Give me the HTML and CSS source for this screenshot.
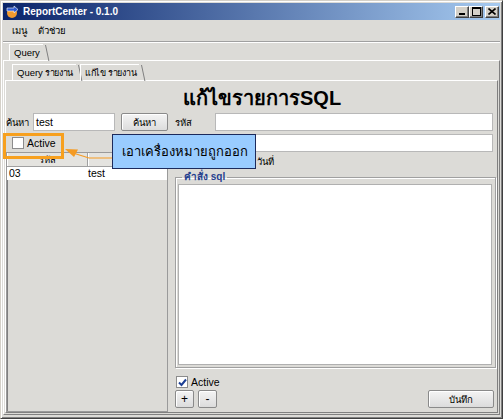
FILE: index.html
```html
<!DOCTYPE html>
<html lang="th">
<head>
<meta charset="utf-8">
<title>ReportCenter - 0.1.0</title>
<link rel="stylesheet" href="styles.css">
</head>
<body>
<div class="window">
  <div class="titlebar">
    <svg class="app-icon" width="15" height="14" viewBox="0 0 15 14">
      <circle cx="7" cy="8" r="5" fill="#f29a2e"/>
      <path d="M2 3 L9 3 L9 1 L13 4.5 L9 8 L9 6 L2 6 Z" fill="#2f5bd0" stroke="#fff" stroke-width="0.6"/>
    </svg>
    <span class="title">ReportCenter - 0.1.0</span>
    <div class="win-btns">
      <span class="wbtn"><svg width="8" height="7" viewBox="0 0 8 7"><rect x="1" y="5" width="6" height="2" fill="#000"/></svg></span>
      <span class="wbtn"><svg width="9" height="9" viewBox="0 0 9 9"><rect x="0.5" y="0.5" width="8" height="8" fill="none" stroke="#000"/><rect x="0" y="0" width="9" height="2" fill="#000"/></svg></span>
      <span class="wbtn close"><svg width="8" height="7" viewBox="0 0 8 7"><path d="M0.5 0.5 L7.5 6.5 M7.5 0.5 L0.5 6.5" stroke="#000" stroke-width="1.6"/></svg></span>
    </div>
  </div>
  <div class="menubar">
    <span class="menu th">เมนู</span>
    <span class="menu th">ตัวช่วย</span>
  </div>
  <div class="tabs1">
    <span class="tab sel">Query</span>
  </div>
  <div class="panel1">
    <div class="tabs2">
      <span class="tab">Query <span class="th">รายงาน</span></span>
      <span class="tab sel th">แก้ไข รายงาน</span>
    </div>
    <div class="panel2">
      <div class="heading">แก้ไขรายการSQL</div>
      <div class="cols">
        <div class="left">
          <div class="search">
            <span class="lbl-search th">ค้นหา</span>
            <span class="input small">test</span>
            <span class="btn search-btn th">ค้นหา</span>
          </div>
          <div class="check-row first">
            <span class="checkbox"></span>
            <span>Active</span>
          </div>
          <div class="table">
            <div class="thead">
              <span class="c1 th">รหัส</span>
              <span class="c2"></span>
            </div>
            <div class="trow">
              <span class="c1">03</span>
              <span class="c2">test</span>
            </div>
          </div>
        </div>
        <div class="right">
          <div class="frow">
            <span class="flabel th">รหัส</span>
            <span class="input wide"></span>
          </div>
          <div class="frow second">
            <span class="flabel"></span>
            <span class="input wide"></span>
          </div>
          <div class="date-row th">วันที่</div>
          <fieldset class="group">
            <legend class="th">คำสั่ง sql</legend>
            <div class="textarea"></div>
          </fieldset>
          <div class="check-row bottom">
            <span class="checkbox checked">
              <svg width="9" height="9" viewBox="0 0 9 9"><path d="M1 4.5 L3.5 7 L8 1.5" fill="none" stroke="#1c3f94" stroke-width="2"/></svg>
            </span>
            <span>Active</span>
          </div>
          <div class="btn-row">
            <span class="btn sq">+</span>
            <span class="btn sq">-</span>
            <span class="spacer"></span>
            <span class="btn save th">บันทึก</span>
          </div>
        </div>
      </div>
    </div>
  </div>

  <div class="highlight"></div>
  <svg class="arrow" width="60" height="20" viewBox="60 145 60 20">
    <path d="M72 152 L88 157 L111 157" fill="none" stroke="#f59b23" stroke-width="1.2"/>
    <polygon points="64,148 77,148.5 73,156" fill="#f59b23"/>
  </svg>
  <div class="callout">เอาเครื่องหมายถูกออก</div>
</div>
</body>
</html>
```
FILE: styles.css
```css
* { box-sizing: border-box; }
html, body { margin: 0; padding: 0; }
body {
  width: 503px;
  height: 419px;
  overflow: hidden;
  font-family: "Liberation Sans", "DejaVu Sans", sans-serif;
  font-size: 10.5px;
  color: #000;
  background: #dcdbd7;
}
.th { font-size: 9.5px; }
.window {
  position: relative;
  width: 503px;
  height: 419px;
  display: flex;
  flex-direction: column;
  padding: 2px 2px 3px 2px;
  background: #dcdbd7;
  border: 1px solid #d4d0c8;
  border-right-color: #404040;
  border-bottom-color: #404040;
  box-shadow: inset 1px 1px 0 #fff, inset -1px -1px 0 #808080;
}
.titlebar {
  height: 17px;
  display: flex;
  align-items: center;
  background: linear-gradient(to right, #0a246a, #a6caf0);
  padding-left: 2px;
  padding-right: 1px;
}
.app-icon { margin-right: 3px; }
.title {
  color: #fff;
  font-weight: bold;
  font-size: 10px;
  flex: 1;
}
.win-btns { display: flex; }
.wbtn {
  width: 14px;
  height: 12px;
  background: #d4d0c8;
  display: flex;
  align-items: center;
  justify-content: center;
  border: 1px solid;
  border-color: #fff #404040 #404040 #fff;
  box-shadow: inset -1px -1px 0 #808080;
}
.wbtn.close { margin-left: 2px; }
.menubar {
  height: 22px;
  display: flex;
  align-items: center;
  gap: 11px;
  padding-left: 9px;
  border-bottom: 1px solid #a0a0a0;
  box-shadow: 0 1px 0 #fff;
}
.tabs1 {
  padding-left: 6px;
  margin-top: 2px;
  display: flex;
  height: 16px;
}
.tab {
  position: relative;
  display: flex;
  align-items: center;
  gap: 2px;
  padding: 0 3px 0 4px;
  height: 16px;
  border-top: 1px solid #fff;
  border-left: 1px solid #fff;
  margin-right: 4px;
  font-size: 9.5px;
}
.tab.th, .tab .th { font-size: 9px; letter-spacing: -0.3px; }
.tab::after {
  content: "";
  position: absolute;
  right: -3px;
  top: 0;
  width: 1px;
  height: 16px;
  background: #808080;
  transform: skewX(12deg);
  transform-origin: top;
}
.panel1 {
  flex: 1;
  display: flex;
  flex-direction: column;
  border-top: 1px solid #fff;
  border-left: 1px solid #fff;
  border-right: 1px solid #808080;
  border-bottom: 1px solid #808080;
  padding: 3px 1px 1px 1px;
}
.tabs2 {
  display: flex;
  padding-left: 7px;
  height: 16px;
}
.panel2 {
  flex: 1;
  display: flex;
  flex-direction: column;
  border-top: 1px solid #fff;
  border-left: 1px solid #fff;
  border-right: 1px solid #808080;
  border-bottom: 1px solid #808080;
  padding: 0 1px 0 0;
}
.heading {
  font-size: 20px;
  font-weight: bold;
  line-height: 22px;
  padding-top: 6px;
  margin-left: 177px;
  height: 32px;
}
.cols {
  flex: 1;
  display: flex;
}
.left {
  width: 162px;
  display: flex;
  flex-direction: column;
}
.search {
  display: flex;
  align-items: center;
  height: 18px;
}
.lbl-search { width: 27px; }
.input {
  height: 18px;
  background: #fff;
  border: 1px solid #b8b8b8;
  display: flex;
  align-items: center;
  padding-left: 2px;
}
.input.small { width: 82px; }
.btn {
  display: flex;
  align-items: center;
  justify-content: center;
  height: 18px;
  background: linear-gradient(#f4f4f4, #dcdcdc);
  border: 1px solid #8a8a8a;
  border-radius: 2px;
  box-shadow: inset 1px 1px 0 #fff;
}
.search-btn { width: 47px; margin-left: 6px; }
.check-row {
  display: flex;
  align-items: center;
  height: 12px;
}
.check-row.first { margin-top: 6px; padding-left: 6px; }
.checkbox {
  width: 12px;
  height: 12px;
  background: #fff;
  border: 1px solid #8c8c8c;
  margin-right: 3px;
  display: flex;
  align-items: center;
  justify-content: center;
}
.table {
  margin-top: 3px;
  flex: 1;
  border: 1px solid #9a9a9a;
  box-shadow: inset 1px 1px 0 #808080;
}
.thead {
  display: flex;
  height: 14px;
  background: #e4e3df;
  border-bottom: 1px solid #a0a0a0;
}
.thead span {
  text-align: center;
  border-right: 1px solid #a0a0a0;
  border-left: 1px solid #fff;
  line-height: 13px;
}
.c1 { width: 81px; }
.c2 { flex: 1; }
.trow {
  display: flex;
  height: 13px;
  background: #fff;
  line-height: 13px;
}
.trow .c1 { padding-left: 2px; }
.right {
  flex: 1;
  display: flex;
  flex-direction: column;
  padding-left: 7px;
}
.frow {
  display: flex;
  align-items: center;
  height: 18px;
}
.frow.second { margin-top: 3px; }
.flabel { width: 40px; }
.input.wide { flex: 1; margin-right: 3px; }
.date-row {
  height: 15px;
  line-height: 15px;
  padding-left: 82px;
  margin-top: 2px;
}
.group {
  flex: 1;
  margin: 2px 0 0 0;
  padding: 0 3px 2px 2px;
  border: 1px solid #a0a0a0;
  box-shadow: 1px 1px 0 #fff, inset 1px 1px 0 #fff;
  display: flex;
  flex-direction: column;
  min-height: 0;
}
.group legend {
  font-weight: bold;
  color: #26418f;
  padding: 0 2px;
  margin-left: 4px;
  line-height: 12px;
  font-size: 10px;
}
.textarea {
  flex: 1;
  background: #fff;
  border: 1px solid #b0b0b0;
  margin-top: 1px;
}
.check-row.bottom { margin-top: 8px; padding-left: 1px; }
.btn-row {
  display: flex;
  margin-top: 2px;
  margin-bottom: 4px;
  height: 18px;
}
.btn.sq { width: 19px; margin-right: 4px; font-size: 12px; }
.spacer { flex: 1; }
.btn.save { width: 66px; margin-right: 2px; }

.highlight {
  position: absolute;
  left: 2px;
  top: 132px;
  width: 61px;
  height: 26px;
  border: 3px solid #f7a01e;
}
.arrow {
  position: absolute;
  left: 60px;
  top: 145px;
}
.callout {
  position: absolute;
  left: 111px;
  top: 133px;
  width: 144px;
  height: 35px;
  background: #99ccff;
  border: 1px solid #1c2a5c;
  font-size: 13px;
  display: flex;
  align-items: center;
  padding-left: 9px;
}
```
